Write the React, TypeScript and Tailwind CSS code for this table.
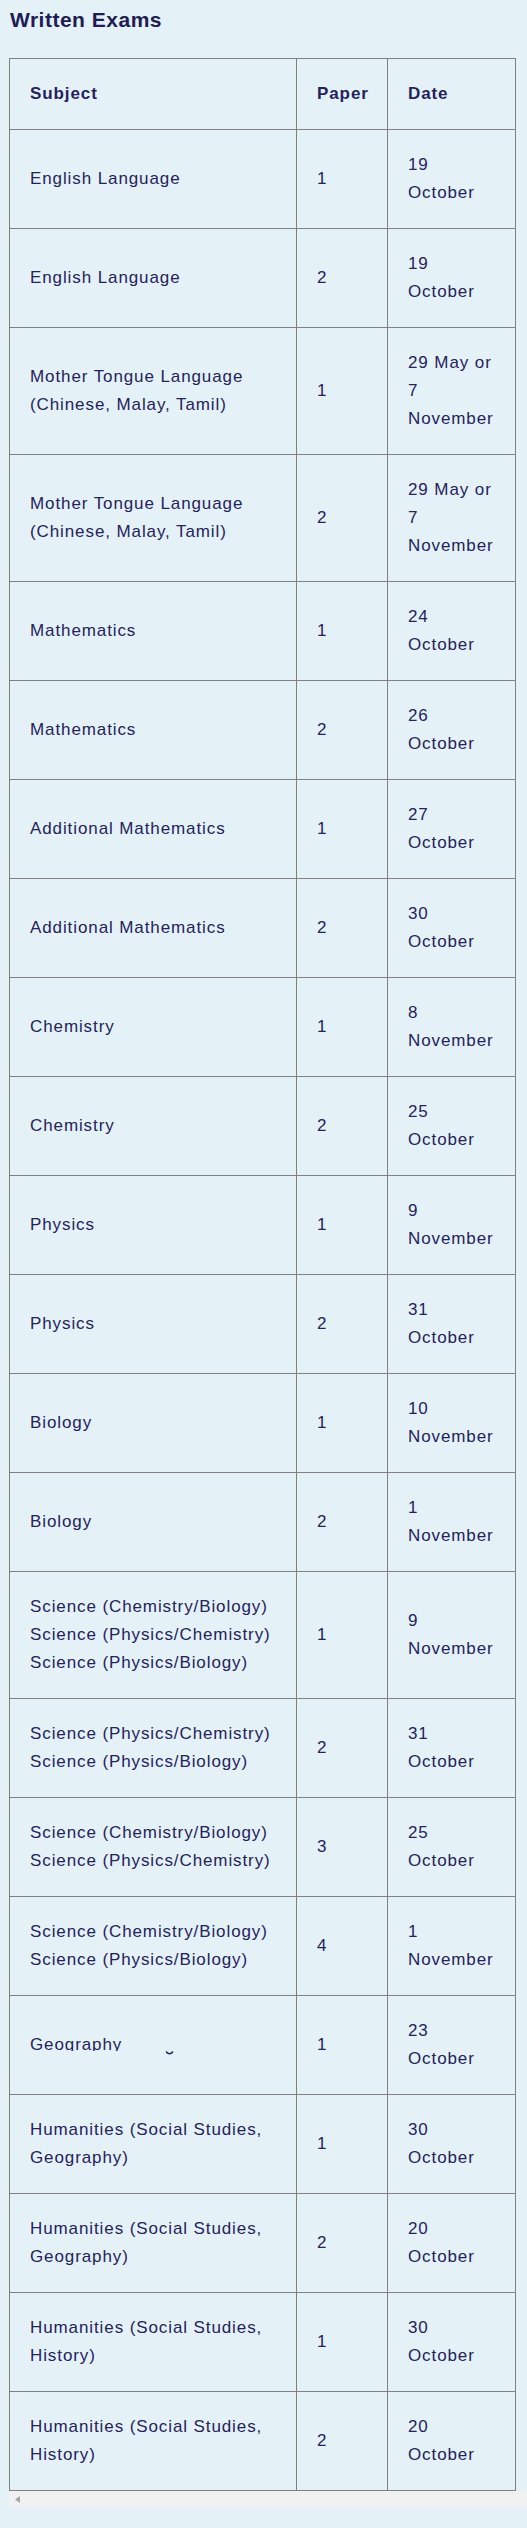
import React from "react";

type Row = { subject: string[]; paper: string; date: string[]; glitch?: boolean };

const rows: Row[] = [
  { subject: ["English Language"], paper: "1", date: ["19", "October"] },
  { subject: ["English Language"], paper: "2", date: ["19", "October"] },
  { subject: ["Mother Tongue Language", "(Chinese, Malay, Tamil)"], paper: "1", date: ["29 May or", "7", "November"] },
  { subject: ["Mother Tongue Language", "(Chinese, Malay, Tamil)"], paper: "2", date: ["29 May or", "7", "November"] },
  { subject: ["Mathematics"], paper: "1", date: ["24", "October"] },
  { subject: ["Mathematics"], paper: "2", date: ["26", "October"] },
  { subject: ["Additional Mathematics"], paper: "1", date: ["27", "October"] },
  { subject: ["Additional Mathematics"], paper: "2", date: ["30", "October"] },
  { subject: ["Chemistry"], paper: "1", date: ["8", "November"] },
  { subject: ["Chemistry"], paper: "2", date: ["25", "October"] },
  { subject: ["Physics"], paper: "1", date: ["9", "November"] },
  { subject: ["Physics"], paper: "2", date: ["31", "October"] },
  { subject: ["Biology"], paper: "1", date: ["10", "November"] },
  { subject: ["Biology"], paper: "2", date: ["1", "November"] },
  {
    subject: ["Science (Chemistry/Biology)", "Science (Physics/Chemistry)", "Science (Physics/Biology)"],
    paper: "1",
    date: ["9", "November"],
  },
  { subject: ["Science (Physics/Chemistry)", "Science (Physics/Biology)"], paper: "2", date: ["31", "October"] },
  { subject: ["Science (Chemistry/Biology)", "Science (Physics/Chemistry)"], paper: "3", date: ["25", "October"] },
  { subject: ["Science (Chemistry/Biology)", "Science (Physics/Biology)"], paper: "4", date: ["1", "November"] },
  { subject: ["Geography"], paper: "1", date: ["23", "October"], glitch: true },
  { subject: ["Humanities (Social Studies,", "Geography)"], paper: "1", date: ["30", "October"] },
  { subject: ["Humanities (Social Studies,", "Geography)"], paper: "2", date: ["20", "October"] },
  { subject: ["Humanities (Social Studies,", "History)"], paper: "1", date: ["30", "October"] },
  { subject: ["Humanities (Social Studies,", "History)"], paper: "2", date: ["20", "October"] },
];

const cell = "border border-[#808080] px-[20px] py-[21px] align-middle text-left";

export default function App() {
  return (
    <div
      className="min-h-[2528px] bg-[#e4f2f7] text-[#25225e] text-[17px] leading-[28px] tracking-[0.9px]"
      style={{ fontFamily: '"Liberation Sans", Arial, sans-serif' }}
    >
      <h2 className="pt-[6px] pl-[10px] text-[21px] leading-[28px] font-bold tracking-[0.5px] text-[#201c56]">
        Written Exams
      </h2>
      <div className="mt-[24px] ml-[9px]">
        <table className="w-[506px] table-fixed border-collapse border border-[#333333]">
          <colgroup>
            <col className="w-[287px]" />
            <col className="w-[91px]" />
            <col className="w-[128px]" />
          </colgroup>
          <thead>
            <tr>
              <th className={`${cell} font-bold`}>Subject</th>
              <th className={`${cell} font-bold`}>Paper</th>
              <th className={`${cell} font-bold`}>Date</th>
            </tr>
          </thead>
          <tbody>
            {rows.map((r, i) => (
              <tr key={i}>
                <td className={cell}>
                  {r.glitch ? (
                    <div className="relative h-[28px]">
                      <div className="h-[20px] overflow-hidden whitespace-nowrap">{r.subject[0]}</div>
                      <svg
                        className="absolute left-[135px] top-[20px]"
                        width="9"
                        height="5"
                        viewBox="0 0 9 5"
                      >
                        <path d="M1 0.5 Q4.5 5 8 0.5" fill="none" stroke="#25225e" strokeWidth="1.4" />
                      </svg>
                    </div>
                  ) : (
                    r.subject.map((s, j) => (
                      <div key={j} className="whitespace-nowrap">
                        {s}
                      </div>
                    ))
                  )}
                </td>
                <td className={cell}>{r.paper}</td>
                <td className={cell}>
                  {r.date.map((d, j) => (
                    <div key={j} className="whitespace-nowrap">
                      {d}
                    </div>
                  ))}
                </td>
              </tr>
            ))}
          </tbody>
        </table>
        <div className="flex h-[16px] items-center bg-[#f1f1f1] pl-[6px]">
          <svg width="5" height="7" viewBox="0 0 5 7">
            <path d="M5 0 L0 3.5 L5 7 Z" fill="#a3a3a3" />
          </svg>
        </div>
      </div>
    </div>
  );
}
